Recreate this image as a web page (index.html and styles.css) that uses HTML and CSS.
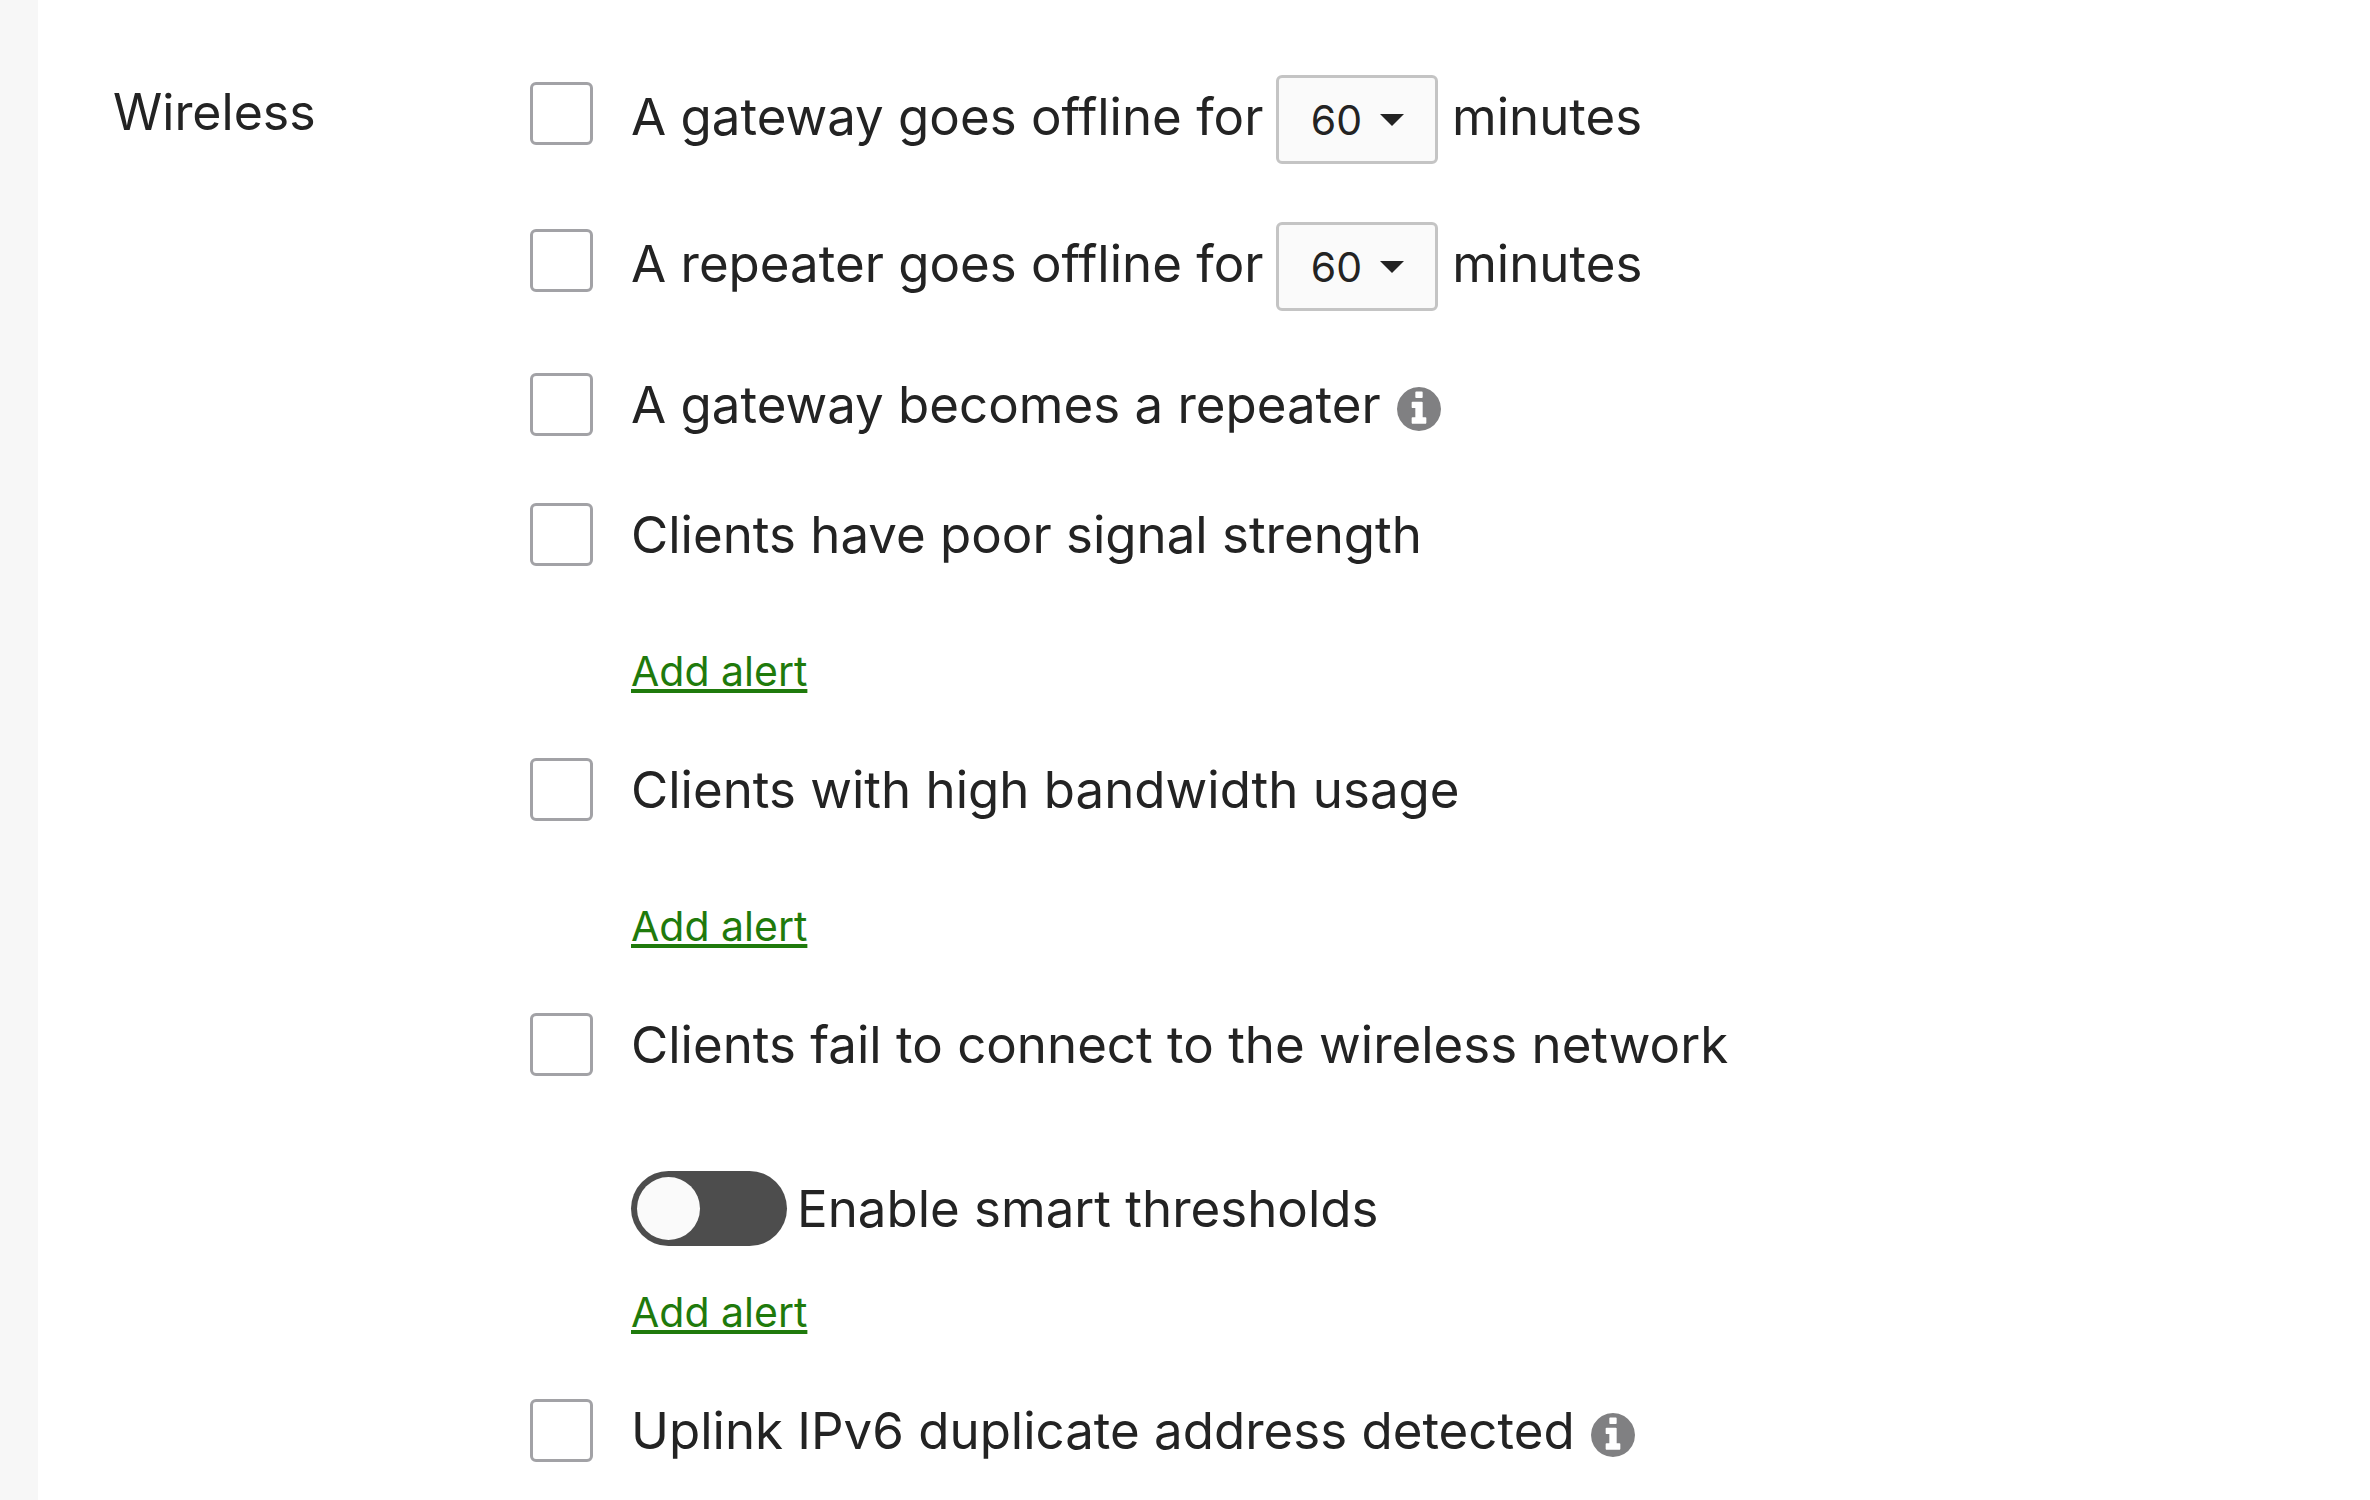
FILE: index.html
```html
<!DOCTYPE html>
<html lang="en">

<head>
    <meta charset="UTF-8">
    <meta name="viewport" content="width=device-width, initial-scale=1.0">
    <title>Alerts - Wireless</title>
    <link rel="stylesheet" href="styles.css">
</head>

<body>
    <aside class="rail"></aside>

    <main class="settings">
        <h2 class="section-title">Wireless</h2>

        <div class="alert-list">
            <!-- Offline alerts -->
            <div class="alert-row has-select">
                <input type="checkbox" class="checkbox" id="gatewayOffline">
                <div class="alert-text">
                    <label for="gatewayOffline">A gateway goes offline for</label>
                    <span class="select-wrap"><select class="select" id="gatewayMinutes" aria-label="Gateway offline minutes">
                        <option>5</option>
                        <option>30</option>
                        <option selected>60</option>
                    </select></span>
                    <label for="gatewayMinutes">minutes</label>
                </div>
            </div>

            <div class="alert-row has-select">
                <input type="checkbox" class="checkbox" id="repeaterOffline">
                <div class="alert-text">
                    <label for="repeaterOffline">A repeater goes offline for</label>
                    <span class="select-wrap"><select class="select" id="repeaterMinutes" aria-label="Repeater offline minutes">
                        <option>5</option>
                        <option>30</option>
                        <option selected>60</option>
                    </select></span>
                    <label for="repeaterMinutes">minutes</label>
                </div>
            </div>

            <div class="alert-row">
                <input type="checkbox" class="checkbox" id="becomesRepeater">
                <div class="alert-text">
                    <label for="becomesRepeater">A gateway becomes a repeater</label>
                    <svg class="info-icon" viewBox="0 128 1536 1536" aria-hidden="true">
                        <path d="M1024 1376v-160q0-14-9-23t-23-9h-96v-512q0-14-9-23t-23-9h-320q-14 0-23 9t-9 23v160q0 14 9 23t23 9h96v320h-96q-14 0-23 9t-9 23v160q0 14 9 23t23 9h448q14 0 23-9t9-23zm-128-896v-160q0-14-9-23t-23-9h-192q-14 0-23 9t-9 23v160q0 14 9 23t23 9h192q14 0 23-9t9-23zm640 416q0 209-103 385.5t-279.5 279.5-385.5 103-385.5-103-279.5-279.5-103-385.5 103-385.5 279.5-279.5 385.5-103 385.5 103 279.5 279.5 103 385.5z"/>
                    </svg>
                </div>
            </div>

            <!-- Client alerts -->
            <div class="alert-group">
                <div class="alert-row">
                    <input type="checkbox" class="checkbox" id="poorSignal">
                    <label class="alert-text" for="poorSignal">Clients have poor signal strength</label>
                </div>
                <a class="add-link" href="#">Add alert</a>
            </div>

            <div class="alert-group">
                <div class="alert-row">
                    <input type="checkbox" class="checkbox" id="highBandwidth">
                    <label class="alert-text" for="highBandwidth">Clients with high bandwidth usage</label>
                </div>
                <a class="add-link" href="#">Add alert</a>
            </div>

            <div class="alert-group">
                <div class="alert-row">
                    <input type="checkbox" class="checkbox" id="failConnect">
                    <label class="alert-text" for="failConnect">Clients fail to connect to the wireless network</label>
                </div>
                <div class="toggle-row">
                    <input type="checkbox" class="toggle" role="switch" id="smartThresholds">
                    <label for="smartThresholds">Enable smart thresholds</label>
                </div>
                <a class="add-link after-toggle" href="#">Add alert</a>
            </div>

            <div class="alert-row">
                <input type="checkbox" class="checkbox" id="ipv6Duplicate">
                <div class="alert-text">
                    <label for="ipv6Duplicate">Uplink IPv6 duplicate address detected</label>
                    <svg class="info-icon" viewBox="0 128 1536 1536" aria-hidden="true">
                        <path d="M1024 1376v-160q0-14-9-23t-23-9h-96v-512q0-14-9-23t-23-9h-320q-14 0-23 9t-9 23v160q0 14 9 23t23 9h96v320h-96q-14 0-23 9t-9 23v160q0 14 9 23t23 9h448q14 0 23-9t9-23zm-128-896v-160q0-14-9-23t-23-9h-192q-14 0-23 9t-9 23v160q0 14 9 23t23 9h192q14 0 23-9t9-23zm640 416q0 209-103 385.5t-279.5 279.5-385.5 103-385.5-103-279.5-279.5-103-385.5 103-385.5 279.5-279.5 385.5-103 385.5 103 279.5 279.5 103 385.5z"/>
                    </svg>
                </div>
            </div>
        </div>
    </main>
</body>

</html>
```
FILE: styles.css
```css
/* Base styles */
* {
    box-sizing: border-box;
}

body {
    margin: 0;
    min-height: 100vh;
    display: flex;
    font-family: Inter, sans-serif;
    font-size: 51px;
    line-height: 72px;
    color: #232323;
    background: #fff;
}

.rail {
    flex: 0 0 38px;
    background: #f7f7f7;
}

/* Section layout */
.settings {
    flex: 1;
    display: grid;
    grid-template-columns: 417px 1fr;
    padding: 75px 75px 24px;
}

.section-title {
    margin: 0;
    font-size: 50px;
    font-weight: 400;
    line-height: 74px;
}

.alert-list {
    display: flex;
    flex-direction: column;
    gap: 58px;
}

.alert-row {
    display: flex;
    align-items: flex-start;
    gap: 38px;
}

/* Checkboxes */
.checkbox {
    appearance: none;
    flex: none;
    width: 63px;
    height: 63px;
    margin: 4px 0 0;
    border: 3px solid #a2a2a6;
    border-radius: 6px;
    background: #fff;
}

.has-select .checkbox {
    margin-top: 7px;
}

.checkbox:checked {
    background: #1f7a0c;
}

/* Minutes drop-down */
.select-wrap {
    position: relative;
    display: inline-block;
    margin-left: -2px;
}

.select-wrap::after {
    content: "";
    position: absolute;
    top: 39px;
    right: 34px;
    border: 12px solid transparent;
    border-top-color: #232323;
    border-bottom: 0;
    pointer-events: none;
}

.select {
    appearance: none;
    width: 162px;
    height: 89px;
    padding: 0 0 0 32px;
    border: 3px solid #c4c4c4;
    border-radius: 6px;
    font: inherit;
    font-size: 41px;
    line-height: 50px;
    color: inherit;
    background: #fafafa;
}

.info-icon {
    width: 44px;
    height: 44px;
    margin-left: 2px;
    vertical-align: -8px;
    fill: #808082;
}

/* Links */
.add-link {
    display: block;
    width: fit-content;
    margin: 75px 0 0 101px;
    font-size: 41px;
    line-height: 50px;
    color: #1f7a0c;
    text-decoration-thickness: 4px;
    text-underline-offset: 3px;
    text-decoration-skip-ink: none;
}

.after-toggle {
    margin-top: 41px;
}

/* Toggle */
.toggle-row {
    display: flex;
    align-items: center;
    gap: 10px;
    margin: 90px 0 0 101px;
}

.toggle {
    appearance: none;
    width: 156px;
    height: 75px;
    margin: 0;
    padding: 6px;
    border-radius: 38px;
    background: #4d4d4d;
}

.toggle::before {
    content: "";
    display: block;
    width: 63px;
    height: 63px;
    border-radius: 50%;
    background: #fafafa;
}

.toggle:checked::before {
    margin-left: auto;
}
```
